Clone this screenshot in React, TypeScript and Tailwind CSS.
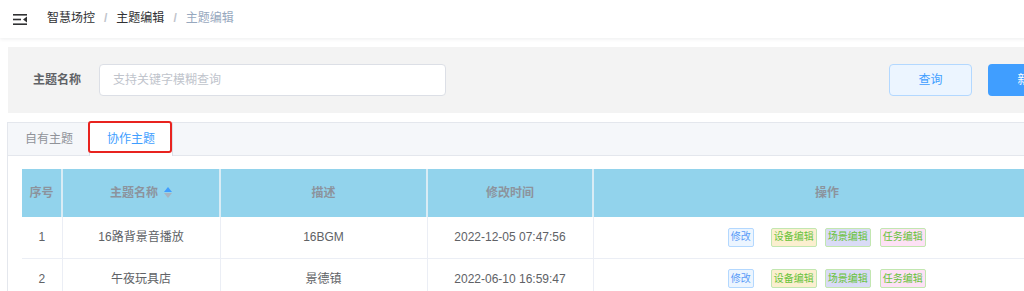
import React from 'react';

const font = { fontFamily: '"Liberation Sans", "Noto Sans CJK SC", sans-serif' };

interface Row {
    id: number;
    name: string;
    desc: string;
    time: string;
}

const rows: Row[] = [
    { id: 1, name: '16路背景音播放', desc: '16BGM', time: '2022-12-05 07:47:56' },
    { id: 2, name: '午夜玩具店', desc: '景德镇', time: '2022-06-10 16:59:47' },
];

function FoldIcon() {
    return (
        <svg width="15" height="11" viewBox="0 0 15 11" className="text-[#303133]">
            <rect x="0" y="0" width="14" height="1.6" fill="currentColor" />
            <rect x="0" y="4.7" width="8" height="1.6" fill="currentColor" />
            <rect x="0" y="9.4" width="14" height="1.6" fill="currentColor" />
            <path d="M14 2.6 L10 5.5 L14 8.4 Z" fill="currentColor" />
        </svg>
    );
}

function SortCaret() {
    return (
        <span className="inline-flex flex-col ml-[6px] -mt-[2px]">
            <svg width="8" height="5" viewBox="0 0 8 5">
                <path d="M0 5 L4 0 L8 5 Z" fill="#409eff" />
            </svg>
            <svg width="8" height="5" viewBox="0 0 8 5" className="mt-[1px]">
                <path d="M0 0 L4 5 L8 0 Z" fill="#a8b4c0" />
            </svg>
        </span>
    );
}

function Actions() {
    return (
        <div className="flex items-center justify-center text-[10px] leading-none">
            <span className="h-[19px] px-[2px] flex items-center rounded-[2px] border border-[#b3d8ff] bg-[#ecf5ff] text-[#5a9cf8]">修改</span>
            <span className="ml-[17px] h-[19px] px-[2px] flex items-center rounded-[2px] border border-[#c2e7b0] bg-[#fbefcf] text-[#67c23a]">设备编辑</span>
            <span className="ml-[8px] h-[19px] px-[2px] flex items-center rounded-[2px] border border-[#c2e7b0] bg-[#d9dbf6] text-[#67c23a]">场景编辑</span>
            <span className="ml-[9px] h-[19px] px-[2px] flex items-center rounded-[2px] border border-[#c2e7b0] bg-[#fde1f5] text-[#67c23a]">任务编辑</span>
        </div>
    );
}

export default function App() {
    return (
        <div className="w-[1024px] h-[291px] overflow-hidden bg-white text-[12px] text-[#606266]" style={font}>
            <div className="w-[1100px]">
                {/* top bar */}
                <div className="h-[38px] flex items-center pl-[13px] shadow-[0_1px_4px_rgba(0,21,41,0.08)]">
                    <FoldIcon />
                    <div className="ml-[19px] -mt-[2px] flex items-center">
                        <span className="text-[#303133]">智慧场控</span>
                        <span className="mx-[9px] text-[#c0c4cc] font-bold">/</span>
                        <span className="text-[#303133]">主题编辑</span>
                        <span className="mx-[9px] text-[#c0c4cc] font-bold">/</span>
                        <span className="text-[#97a8be]">主题编辑</span>
                    </div>
                </div>

                {/* search panel */}
                <div className="mt-[9px] ml-[8px] h-[66px] bg-[#f3f3f3] flex items-center">
                    <span className="ml-[25px] font-bold text-[#606266]">主题名称</span>
                    <div className="ml-[18px] w-[347px] h-[32px] bg-white border border-[#dcdfe6] rounded-[4px] flex items-center px-[13px] text-[#c0c4cc]">
                        支持关键字模糊查询
                    </div>
                    <div className="ml-[443px] w-[83px] h-[32px] rounded-[4px] border border-[#b3d8ff] bg-[#ecf5ff] text-[#409eff] flex items-center justify-center">
                        查询
                    </div>
                    <div className="ml-[16px] w-[83px] h-[32px] rounded-[4px] bg-[#409eff] text-white flex items-center justify-center">
                        新增
                    </div>
                </div>

                {/* tabs card */}
                <div className="mt-[9px] ml-[7px] border border-[#e4e7ed] relative">
                    <div className="h-[33px] bg-[#f5f7fa] border-b border-[#e4e7ed] flex items-end">
                        <div className="h-[33px] pl-[17px] pr-[16px] flex items-center text-[#909399]">自有主题</div>
                        <div className="h-[34px] -mb-px px-[17px] bg-white border-x border-[#dcdfe6] flex items-center text-[#409eff]">协作主题</div>
                    </div>
                    <div className="absolute left-[80px] -top-[2px] w-[84px] h-[32px] border-2 border-[#e8231f] rounded-[3px]" />

                    <div className="pt-[13px] pl-[14px] pb-4">
                        <table className="border-collapse text-[12px]">
                            <thead>
                                <tr className="h-[48px] bg-[#92d3ec] text-[#8c939d]">
                                    <th className="w-[40px] font-bold border-r-2 border-[#d9ecf5]">序号</th>
                                    <th className="w-[158px] font-bold border-r-2 border-[#d9ecf5]">
                                        <span className="inline-flex items-center">主题名称<SortCaret /></span>
                                    </th>
                                    <th className="w-[207px] font-bold border-r-2 border-[#d9ecf5]">描述</th>
                                    <th className="w-[166px] font-bold border-r-2 border-[#d9ecf5]">修改时间</th>
                                    <th className="w-[467px] font-bold">操作</th>
                                </tr>
                            </thead>
                            <tbody>
                                {rows.map((r) => (
                                    <tr key={r.id} className="h-[41px] border-b border-[#ebeef5] text-center">
                                        <td className="border-r border-[#ebeef5]">{r.id}</td>
                                        <td className="border-r border-[#ebeef5]">{r.name}</td>
                                        <td className="border-r border-[#ebeef5]">{r.desc}</td>
                                        <td className="border-r border-[#ebeef5]">{r.time}</td>
                                        <td>
                                            <Actions />
                                        </td>
                                    </tr>
                                ))}
                            </tbody>
                        </table>
                    </div>
                </div>
            </div>
        </div>
    );
}
